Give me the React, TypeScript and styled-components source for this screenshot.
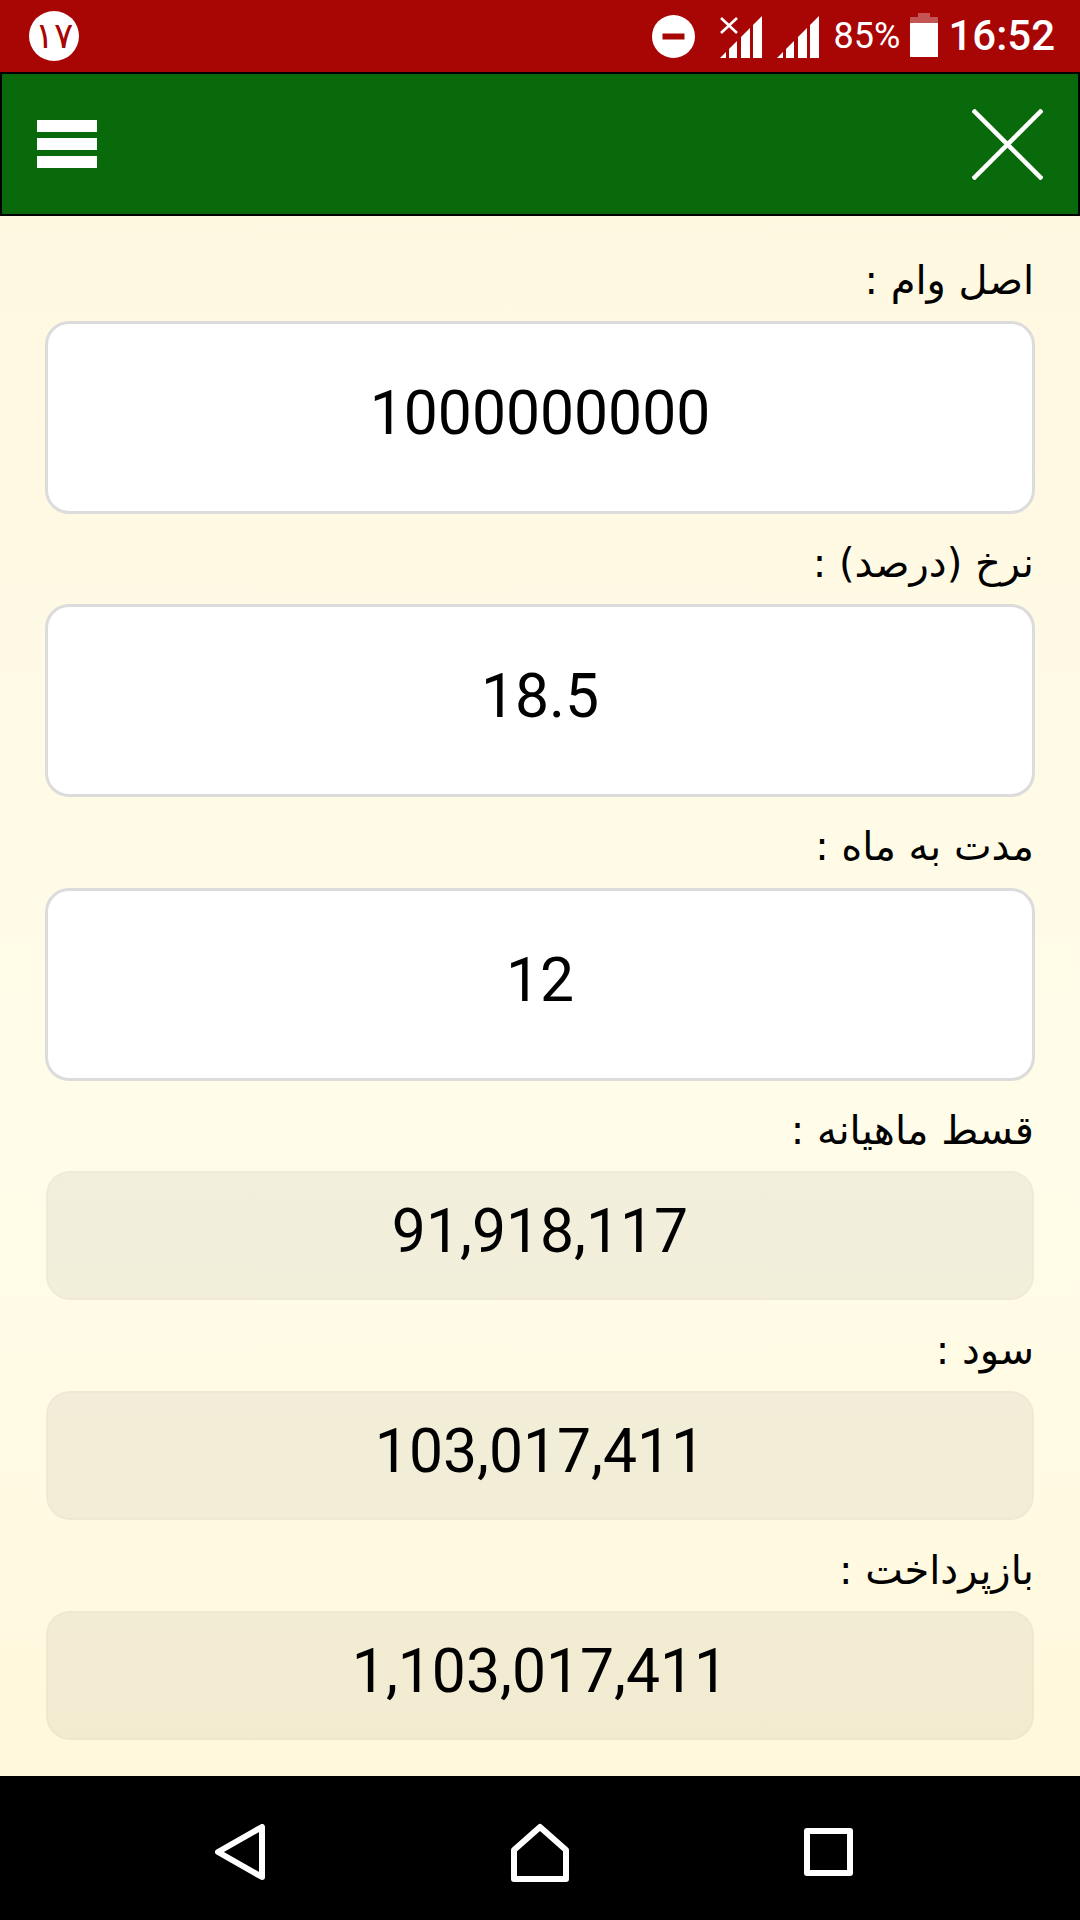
import React from "react";
import styled, { createGlobalStyle } from "styled-components";

const GlobalStyle = createGlobalStyle`
  html, body {
    margin: 0;
    padding: 0;
    background: #000;
  }
`;

const Page = styled.div`
  width: 1080px;
  height: 1920px;
  display: flex;
  flex-direction: column;
  overflow: hidden;
  font-family: Roboto, sans-serif;
`;

const StatusBar = styled.div`
  height: 72px;
  flex: none;
  background: #a80505;
  display: flex;
  align-items: center;
  padding: 0 25px 0 29px;
  color: #fff;
`;

const NotificationBadge = styled.div`
  width: 50px;
  height: 50px;
  border-radius: 50%;
  background: #fff;
  color: #a80505;
  display: flex;
  align-items: center;
  justify-content: center;
  font-family: "DejaVu Sans", sans-serif;
  font-size: 36px;
  line-height: 1;
`;

const StatusRight = styled.div`
  margin-left: auto;
  display: flex;
  align-items: center;
`;

const StatusIcon = styled.svg<{ $left?: number; $top?: number }>`
  display: block;
  flex: none;
  margin-left: ${(p) => p.$left ?? 0}px;
  margin-top: ${(p) => p.$top ?? 0}px;
`;

const BatteryText = styled.span`
  font-size: 36px;
  line-height: 72px;
  margin-left: 15px;
`;

const Clock = styled.span`
  font-size: 42px;
  font-weight: 500;
  line-height: 72px;
  margin-left: 10px;
`;

const Header = styled.header`
  height: 144px;
  flex: none;
  box-sizing: border-box;
  background: #086a0a;
  border: 2px solid #000;
  display: flex;
  align-items: center;
  justify-content: space-between;
  padding: 0 35px;
`;

const MenuButton = styled.div`
  display: flex;
  flex-direction: column;
  gap: 6px;
`;

const MenuBar = styled.span`
  display: block;
  width: 60px;
  height: 12px;
  background: #fff;
`;

const Content = styled.main`
  flex: 1;
  box-sizing: border-box;
  padding: 14.67px 45px 0;
  background: linear-gradient(#fff8e1, #fffce9 60%, #fff8dc);
  direction: rtl;
`;

const Label = styled.label`
  display: block;
  height: 90.33px;
  box-sizing: border-box;
  padding-top: 25px;
  padding-right: 1px;
  font-family: "DejaVu Sans", sans-serif;
  font-size: 40px;
  line-height: 48px;
  color: #000;
`;

const Input = styled.input`
  display: block;
  width: 100%;
  height: 193px;
  box-sizing: border-box;
  margin: 0;
  padding: 0 0 8px;
  border: 3px solid #dcdcdc;
  border-radius: 24px;
  background: #fff;
  color: #000;
  font-family: Roboto, sans-serif;
  font-size: 60.6px;
  text-align: center;
  direction: ltr;
  outline: none;
`;

const Result = styled.output`
  display: flex;
  align-items: center;
  justify-content: center;
  height: 128.67px;
  box-sizing: border-box;
  margin: 0 1px 1px;
  padding-bottom: 7px;
  border: 2px solid rgba(0, 0, 0, 0.02);
  border-radius: 24px;
  background: rgba(0, 0, 0, 0.05);
  font-size: 60.6px;
  direction: ltr;
  color: #000;
`;

const NavBar = styled.nav`
  height: 144px;
  flex: none;
  box-sizing: border-box;
  background: #000;
  display: grid;
  grid-template-columns: 300px 300px 276px;
  padding: 8px 0 0 90px;
  align-items: center;
  justify-items: center;
`;

const bars = [
  [0, 6],
  [9, 17],
  [21, 30],
  [33, 42],
];

function Signal({ crossed, left }: { crossed?: boolean; left: number }) {
  return (
    <StatusIcon $left={left} $top={2} width="42" height="42" viewBox="0 0 42 42" fill="#fff">
      {bars.map(([a, b]) => (
        <polygon key={a} points={`${a},42 ${a},${42 - a} ${b},${42 - b} ${b},42`} />
      ))}
      {crossed && (
        <path d="M1 2 L17 17 M17 2 L1 17" stroke="#fff" strokeWidth="2.6" fill="none" />
      )}
    </StatusIcon>
  );
}

const fields = [
  { label: "اصل وام :", value: "1000000000" },
  { label: "نرخ (درصد) :", value: "18.5" },
  { label: "مدت به ماه :", value: "12" },
];

const results = [
  { label: "قسط ماهیانه :", value: "91,918,117" },
  { label: "سود :", value: "103,017,411" },
  { label: "بازپرداخت :", value: "1,103,017,411" },
];

export default function App() {
  return (
    <Page>
      <GlobalStyle />
      <StatusBar>
        <NotificationBadge>۱۷</NotificationBadge>
        <StatusRight>
          <StatusIcon $top={1} width="43" height="43" viewBox="0 0 43 43">
            <circle cx="21.5" cy="21.5" r="21.5" fill="#fff" />
            <rect x="10.5" y="18.5" width="22" height="6" fill="#a80505" />
          </StatusIcon>
          <Signal crossed left={25} />
          <Signal left={15} />
          <BatteryText>85%</BatteryText>
          <StatusIcon $left={10} $top={-2} width="28" height="44" viewBox="0 0 28 44" fill="#fff">
            <path d="M8 0 H20 V4 H28 V10 H0 V4 H8 Z" opacity="0.32" />
            <path d="M0 10 H28 V44 H0 Z" />
          </StatusIcon>
          <Clock>16:52</Clock>
        </StatusRight>
      </StatusBar>
      <Header>
        <MenuButton>
          <MenuBar />
          <MenuBar />
          <MenuBar />
        </MenuButton>
        <svg width="71" height="71" viewBox="0 0 71 71" stroke="#fff" strokeWidth="4.5" fill="none">
          <path d="M1 1 L70 70 M70 1 L1 70" />
        </svg>
      </Header>
      <Content>
        {fields.map((f) => (
          <div key={f.label}>
            <Label>{f.label}</Label>
            <Input readOnly value={f.value} />
          </div>
        ))}
        {results.map((r) => (
          <div key={r.label}>
            <Label>{r.label}</Label>
            <Result>{r.value}</Result>
          </div>
        ))}
      </Content>
      <NavBar>
        <svg width="50" height="56" viewBox="0 0 50 56" fill="none" stroke="#fff" strokeWidth="6" strokeLinejoin="round">
          <path d="M47 3 V53 L3 28 Z" />
        </svg>
        <svg width="58" height="59" viewBox="0 0 58 59" fill="none" stroke="#fff" strokeWidth="6" strokeLinejoin="round">
          <path d="M29 4 L55 27 V56 H3 V27 Z" />
        </svg>
        <svg width="49" height="48" viewBox="0 0 49 48" fill="none" stroke="#fff" strokeWidth="6" strokeLinejoin="round">
          <rect x="3" y="3" width="43" height="42" />
        </svg>
      </NavBar>
    </Page>
  );
}
